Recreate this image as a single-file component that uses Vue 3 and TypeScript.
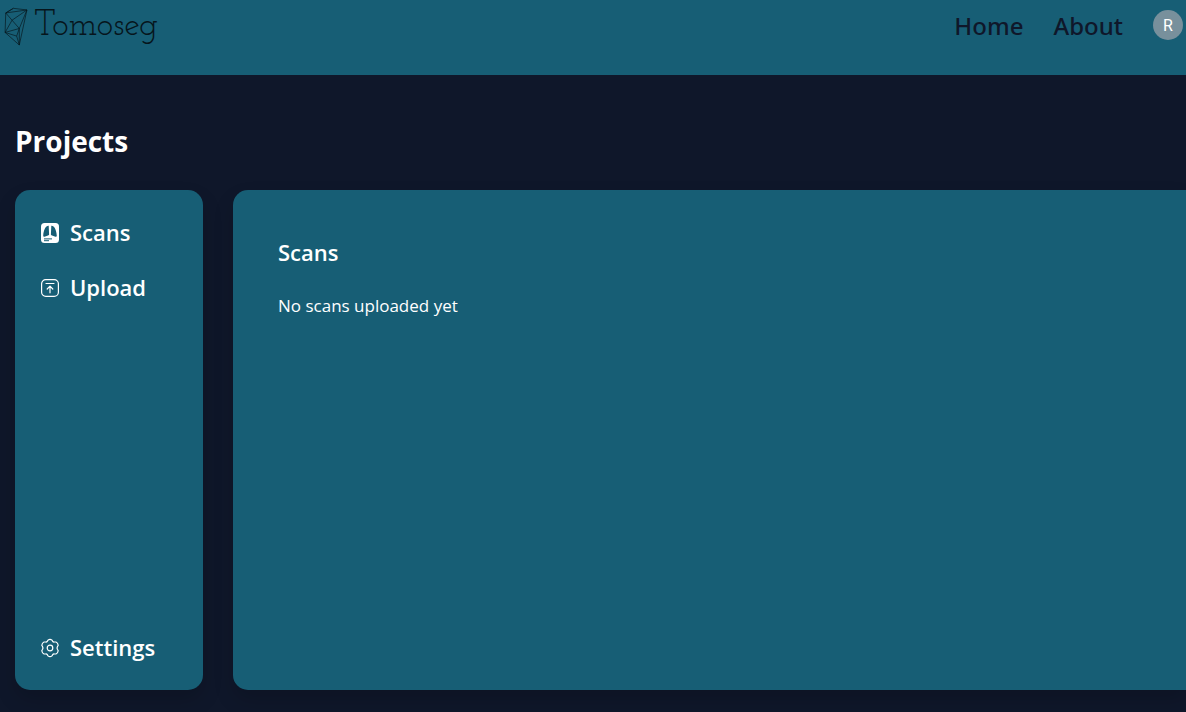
<script setup lang="ts">
import { ref } from 'vue'

type Section = 'Scans' | 'Upload' | 'Settings'

const active = ref<Section>('Scans')
const scans = ref<string[]>([])
</script>

<template>
  <div class="page">
    <header class="topbar">
      <a class="brand" href="#">
        <svg class="brand-mark" viewBox="0 0 72 118" aria-hidden="true">
          <path d="M5 18 28 4 69 9 46 115 3 77ZM5 18 69 9 24 40ZM24 40 3 77 46 65ZM46 65 69 9M46 65 38 88 3 77M38 88 46 115 46 65M28 4 5 18" />
        </svg>
        <span class="brand-name">Tomoseg</span>
      </a>
      <nav class="links">
        <a href="#home">Home</a>
        <a href="#about">About</a>
        <button class="avatar" type="button" aria-label="Account">R</button>
      </nav>
    </header>

    <main class="content">
      <h1>Projects</h1>
      <div class="columns">
        <aside class="sidebar">
          <button class="item" type="button" @click="active = 'Scans'">
            <svg viewBox="0 0 20 20" aria-hidden="true">
              <rect x="1" y="0" width="18" height="20" rx="3.5" fill="#fff" />
              <path class="lung" d="M8.7 2.8C6 2.4 3.6 6.5 3.2 12.8c0 .9.5 1.2 1.3 1L8 12.6c.8-.3 1.1-.6 1.1-1.3ZM11.3 2.8c2.7-.4 5.1 3.7 5.5 10 0 .9-.5 1.2-1.3 1L12 12.6c-.8-.3-1.1-.6-1.1-1.3Z" />
              <path class="lines" d="M4 15.9h8M4 17.7h5" />
            </svg>
            <span>Scans</span>
          </button>
          <button class="item" type="button" @click="active = 'Upload'">
            <svg viewBox="0 0 20 20" aria-hidden="true">
              <rect class="stroke" x="1.6" y="1.6" width="16.8" height="16.8" rx="4.2" />
              <path class="stroke" d="M6 5.5h8M10 14.8V8.4M7.2 11 10 8.2l2.8 2.8" />
            </svg>
            <span>Upload</span>
          </button>
          <button class="item last" type="button" @click="active = 'Settings'">
            <svg viewBox="0 0 20 20" aria-hidden="true">
              <path class="stroke" d="M8 2.1Q10 .5 12 2.1L12.8 3.5Q13.4 4.2 14.4 4H16Q17.9 4.8 18.2 7.2L17.4 8.7Q16.8 10 17.4 11.3L18.2 12.8Q17.9 15.2 16 16H14.4Q13.4 15.8 12.8 16.5L12 17.9Q10 19.5 8 17.9L7.2 16.5Q6.6 15.8 5.6 16H4Q2.1 15.2 1.8 12.8L2.6 11.3Q3.2 10 2.6 8.7L1.8 7.2Q2.1 4.8 4 4H5.6Q6.6 4.2 7.2 3.5Z" />
              <circle class="stroke" cx="10" cy="10" r="2.8" />
            </svg>
            <span>Settings</span>
          </button>
        </aside>
        <section class="panel">
          <h2>{{ active }}</h2>
          <p v-if="!scans.length">No scans uploaded yet</p>
        </section>
      </div>
    </main>
  </div>
</template>

<style>
body {
  margin: 0;
  background: #0f172a;
}
</style>

<style scoped>
.page {
  min-height: 100vh;
  overflow: hidden;
  box-sizing: border-box;
  background: #0f172a;
  color: #fff;
  font-family: "Segoe UI", "Open Sans", "Noto Sans", sans-serif;
}
.topbar {
  display: flex;
  justify-content: space-between;
  align-items: flex-start;
  min-height: 75px;
  background: #175e75;
}
.brand {
  display: flex;
  gap: 6px;
  padding: 7px 4px;
  color: #06151c;
  text-decoration: none;
}
.brand-mark {
  width: 24px;
  height: 39px;
  fill: none;
  stroke: #06151c;
  stroke-width: 2;
  stroke-linejoin: round;
}
.brand-name {
  font-family: "Josefin Slab", "Liberation Serif", serif;
  font-size: 35px;
  line-height: 40px;
}
.links {
  display: flex;
  align-items: center;
  gap: 30px;
  padding: 6px 3px 0 0;
}
.links a {
  color: #0f172a;
  font-family: "Noto Sans", sans-serif;
  font-size: 24px;
  font-weight: 500;
  line-height: 40px;
  text-decoration: none;
}
.avatar {
  width: 30px;
  height: 30px;
  margin-bottom: 2px;
  padding: 0;
  border: 0;
  border-radius: 50%;
  background: #78909c;
  color: #fff;
  font-family: Roboto, sans-serif;
  font-size: 16px;
  line-height: 32px;
}
.content {
  padding: 45px 0 22px 15px;
}
h1 {
  margin: 0 0 28px;
  font-size: 28px;
  font-weight: 700;
  line-height: 42px;
}
.columns {
  display: flex;
  gap: 30px;
}
.sidebar,
.panel {
  min-height: 500px;
  box-sizing: border-box;
  background: #175e75;
  box-shadow: 0 10px 20px rgba(0, 0, 0, 0.15);
}
.sidebar {
  display: flex;
  flex-direction: column;
  gap: 15px;
  flex: 0 0 188px;
  padding: 23px 25px 22px;
  border-radius: 15px;
}
.item {
  display: flex;
  align-items: center;
  gap: 10px;
  height: 40px;
  padding: 0;
  border: 0;
  background: none;
  color: #fff;
  font-family: inherit;
  font-size: 22px;
  font-weight: 600;
  line-height: 38px;
  text-align: left;
}
.item span {
  height: 40px;
}
.item svg {
  flex: none;
  width: 20px;
  height: 20px;
}
.last {
  margin-top: auto;
}
.stroke {
  fill: none;
  stroke: #fff;
  stroke-width: 1.2;
  stroke-linecap: round;
  stroke-linejoin: round;
}
.lung {
  fill: #175e75;
}
.lines {
  stroke: #175e75;
  stroke-width: 1;
}
.panel {
  flex: 1;
  padding: 45px;
  border-radius: 15px 0 0 15px;
}
h2 {
  margin: 0 0 25px;
  font-size: 22px;
  font-weight: 600;
  line-height: 34px;
}
p {
  margin: 0;
  font-size: 17px;
  line-height: 24px;
}
</style>
